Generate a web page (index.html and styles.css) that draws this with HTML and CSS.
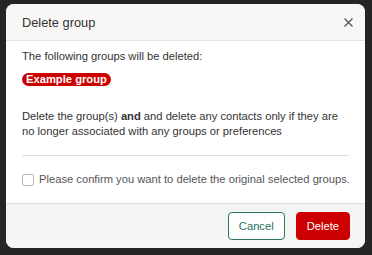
FILE: index.html
```html
<!DOCTYPE html>
<html lang="en">
<head>
  <meta charset="UTF-8" />
  <meta name="viewport" content="width=device-width, initial-scale=1.0"/>
  <title>Delete group</title>
  <link rel="stylesheet" href="styles.css">
</head>
<body>
  <div class="modal">
    <div class="modal-header">
      <h2>Delete group</h2>
      <button class="close" aria-label="Close">
        <svg width="9" height="9" viewBox="0 0 9 9"><path d="M0.5 0.5L8.5 8.5M8.5 0.5L0.5 8.5" stroke="#555" stroke-width="1.3" fill="none"/></svg>
      </button>
    </div>
    <div class="modal-body">
      <p class="lead">The following groups will be deleted:</p>
      <div class="tags"><span class="tag">Example group</span></div>
      <p class="info">Delete the group(s) <b>and</b> and delete any contacts only if they are no longer associated with any groups or preferences</p>
      <hr>
      <label class="confirm"><input type="checkbox"><span class="box"></span><span>Please confirm you want to delete the original selected groups.</span></label>
    </div>
    <div class="modal-footer">
      <button class="btn btn-cancel">Cancel</button>
      <button class="btn btn-delete">Delete</button>
    </div>
  </div>
</body>
</html>
```

FILE: styles.css
```css
body { margin: 0; padding: 4px 7px 0 6px; background: #252525; font-family: "Liberation Sans", Arial, sans-serif; font-size: 11.2px; color: #333; }
.modal { background: #fff; border-radius: 8px; overflow: hidden; }
.modal-header { height: 36px; display: flex; align-items: center; justify-content: space-between; padding: 0 16px; background: #f8f7f6; border-bottom: 1px solid #e2e2e2; }
.modal-header h2 { margin: 0; font-size: 12.8px; font-weight: normal; color: #333; }
.close { border: 0; background: none; padding: 0; display: flex; margin-right: -4px; }
.modal-body { padding: 8px 16px 16px; line-height: 15px; }
.modal-body p { margin: 0; }
.tags { margin-top: 9px; display: flex; }
.tag { background: #cc0000; color: #fff; font-weight: bold; line-height: 13px; padding: 0 4px; border-radius: 7px; }
.modal-body .info { margin-top: 23px; }
hr { border: 0; border-top: 1px solid #dedede; margin: 16px 0 16px; }
.confirm { display: flex; align-items: center; color: #555; white-space: nowrap; }
.confirm input { display: none; }
.box { flex-shrink: 0; width: 10px; height: 10px; border: 1px solid #bbb; border-radius: 2px; margin-right: 5px; background: #fff; }
.modal-footer { display: flex; justify-content: flex-end; gap: 11px; padding: 8px 15px 8px; background: #f4f4f4; border-top: 1px solid #e0e0e0; }
.btn { height: 28px; padding: 0 10px; border-radius: 4px; font-family: inherit; font-size: 11.2px; }
.btn-cancel { background: #fff; border: 1px solid #2d7a55; color: #1f6f5c; }
.btn-delete { background: #cc0000; border: 1px solid #cc0000; color: #fff; }
```
